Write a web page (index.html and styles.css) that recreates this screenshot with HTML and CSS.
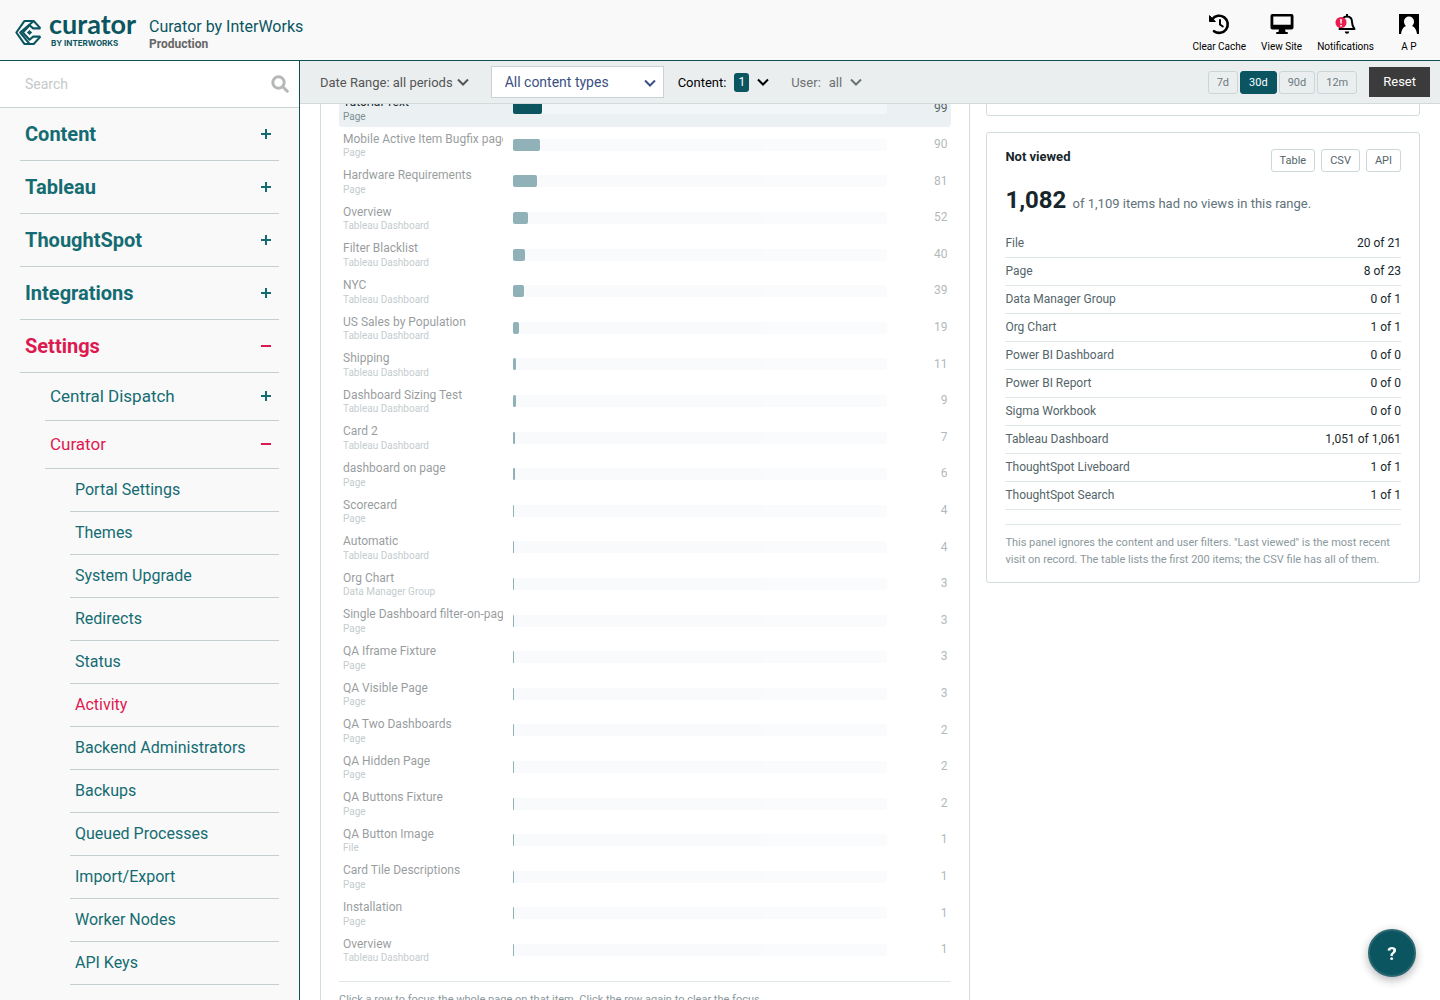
FILE: index.html
```html
<!DOCTYPE html>
<html lang="en">
<head>
  <meta charset="UTF-8" />
  <meta name="viewport" content="width=device-width, initial-scale=1.0"/>
  <title>Activity | Curator by InterWorks</title>
  <link rel="stylesheet" href="styles.css">
</head>
<body>

  <header class="top-bar">
    <a href="#" class="logo">
      <svg class="logo-mark" viewBox="0 0 26 26" fill="none" stroke="#0b5561" stroke-width="2" stroke-linejoin="round">
        <path d="M24.500 9 18 2H9L1.300 13 9 24h9l6.500-7"/>
        <path d="M18 2 5 13l9 11"/>
        <path d="M24.500 9h-7L14 6 7.500 13l6.500 7 3.500-3h7"/>
        <path d="M14 10.500 16.500 13 14 15.500 11.500 13z" fill="#0b5561" stroke="none"/>
      </svg>
      <span class="logo-text">
        <span class="logo-name">curator</span>
        <span class="logo-by">BY INTERWORKS</span>
      </span>
    </a>
    <div class="site">
      <a href="#" class="site-name">Curator by InterWorks</a>
      <div class="site-env">Production</div>
    </div>
    <nav class="tools">
      <a href="#">
        <svg width="22" height="22" viewBox="0 0 22 22" fill="none" stroke="#000" stroke-width="2.600" stroke-linecap="round">
          <path d="M4.200 6.200A8.600 8.600 0 1 1 6 18.200"/>
          <path d="M12 7v4.500l2.800 2" stroke-width="2"/>
          <path d="M1.500 3v5.500H7z" fill="#000" stroke-width="1" stroke-linejoin="round"/>
        </svg>
        Clear Cache
      </a>
      <a href="#">
        <svg width="24" height="22" viewBox="0 0 24 22">
          <path fill-rule="evenodd" d="M2.500 1h19A2 2 0 0 1 23.500 3v11.500a2 2 0 0 1-2 2H15l.6 2.500H17a1 1 0 0 1 0 2H7a1 1 0 0 1 0-2h1.400l.6-2.500H2.500a2 2 0 0 1-2-2V3a2 2 0 0 1 2-2zM3.300 3.600v8.200h17.400V3.600z"/>
        </svg>
        View Site
      </a>
      <a href="#">
        <svg width="24" height="22" viewBox="0 0 24 22">
          <path d="M13 3.500c-3.500 0-5 2.600-5 5.500 0 3.500-1 5-2.500 7h15c-1.500-2-2.500-3.500-2.500-7 0-2.900-1.500-5.500-5-5.500z" fill="none" stroke="#000" stroke-width="2" stroke-linejoin="round"/>
          <path d="M12 1h2v3h-2zM10.800 18.500h4.400a2.200 2.200 0 0 1-4.400 0z"/>
          <circle cx="7" cy="9.500" r="5.500" fill="#e91e4f"/>
          <path d="M7 6v4.500M7 12v1.500" stroke="#fff" stroke-width="1.500"/>
        </svg>
        Notifications
      </a>
      <a href="#" class="avatar">
        <svg width="20" height="22" viewBox="0 0 20 22">
          <path d="M0 1h20v20H0z"/>
          <path d="M10 3.500a5 5 0 0 1 5 5c0 2-1 3.500-2 4.500 3 1 4.500 4 5 8H2c.5-4 2-7 5-8-1-1-2-2.500-2-4.500a5 5 0 0 1 5-5z" fill="#fff"/>
        </svg>
        A P
      </a>
    </nav>
  </header>

  <div class="layout">
    <aside class="sidebar">
      <form class="search">
        <input type="search" placeholder="Search" aria-label="Search">
        <button type="button" aria-label="Search">
          <svg width="18" height="18" viewBox="0 0 18 18" fill="none" stroke="#b5b7b8" stroke-width="3" stroke-linecap="round">
            <circle cx="7.500" cy="7.500" r="5.700"/>
            <path d="m12 12 4.300 4.300"/>
          </svg>
        </button>
      </form>
      <ul class="menu">
        <li><a href="#">Content <i class="plus"></i></a></li>
        <li><a href="#">Tableau <i class="plus"></i></a></li>
        <li><a href="#">ThoughtSpot <i class="plus"></i></a></li>
        <li><a href="#">Integrations <i class="plus"></i></a></li>
        <li>
          <a href="#" class="active">Settings <i class="minus"></i></a>
          <ul class="submenu">
            <li><a href="#">Central Dispatch <i class="plus"></i></a></li>
            <li>
              <a href="#" class="active">Curator <i class="minus"></i></a>
              <ul class="pages">
                <li><a href="#">Portal Settings</a></li>
                <li><a href="#">Themes</a></li>
                <li><a href="#">System Upgrade</a></li>
                <li><a href="#">Redirects</a></li>
                <li><a href="#">Status</a></li>
                <li><a href="#" class="active">Activity</a></li>
                <li><a href="#">Backend Administrators</a></li>
                <li><a href="#">Backups</a></li>
                <li><a href="#">Queued Processes</a></li>
                <li><a href="#">Import/Export</a></li>
                <li><a href="#">Worker Nodes</a></li>
                <li><a href="#">API Keys</a></li>
              </ul>
            </li>
          </ul>
        </li>
      </ul>
    </aside>

    <main class="main">
      <div class="filters">
        <button type="button" class="filter">Date Range: all periods
          <svg class="chevron" viewBox="0 0 12 8"><path d="m1 1.500 5 5 5-5"/></svg>
        </button>
        <div class="type-select">
          <select aria-label="Content type">
            <option>All content types</option>
            <option>Page</option>
            <option>Tableau Dashboard</option>
          </select>
          <svg class="chevron" viewBox="0 0 12 8"><path d="m1 1.500 5 5 5-5"/></svg>
        </div>
        <button type="button" class="filter filter-on">Content: <span class="count">1</span>
          <svg class="chevron" viewBox="0 0 12 8"><path d="m1 1.500 5 5 5-5"/></svg>
        </button>
        <button type="button" class="filter filter-user">User: <span>all</span>
          <svg class="chevron" viewBox="0 0 12 8"><path d="m1 1.500 5 5 5-5"/></svg>
        </button>
        <div class="ranges">
          <button type="button">7d</button>
          <button type="button" class="on">30d</button>
          <button type="button">90d</button>
          <button type="button">12m</button>
        </div>
        <button type="button" class="reset">Reset</button>
      </div>

      <div class="content">
        <div class="panels">
          <section class="card top-content">
            <ul class="rows" id="rows"></ul>
            <p class="note">Click a row to focus the whole page on that item. Click the row again to clear the focus.</p>
          </section>

          <div class="side">
            <section class="card card-end"></section>
            <section class="card not-viewed">
              <div class="card-head">
                <h2>Not viewed</h2>
                <div class="exports">
                  <button type="button">Table</button>
                  <button type="button">CSV</button>
                  <button type="button">API</button>
                </div>
              </div>
              <p class="total"><strong>1,082</strong> of 1,109 items had no views in this range.</p>
              <table>
                <tr><th scope="row">File</th><td>20 of 21</td></tr>
                <tr><th scope="row">Page</th><td>8 of 23</td></tr>
                <tr><th scope="row">Data Manager Group</th><td>0 of 1</td></tr>
                <tr><th scope="row">Org Chart</th><td>1 of 1</td></tr>
                <tr><th scope="row">Power BI Dashboard</th><td>0 of 0</td></tr>
                <tr><th scope="row">Power BI Report</th><td>0 of 0</td></tr>
                <tr><th scope="row">Sigma Workbook</th><td>0 of 0</td></tr>
                <tr><th scope="row">Tableau Dashboard</th><td>1,051 of 1,061</td></tr>
                <tr><th scope="row">ThoughtSpot Liveboard</th><td>1 of 1</td></tr>
                <tr><th scope="row">ThoughtSpot Search</th><td>1 of 1</td></tr>
              </table>
              <p class="note">This panel ignores the content and user filters. "Last viewed" is the most recent visit on record. The table lists the first 200 items; the CSV file has all of them.</p>
            </section>
          </div>
        </div>
      </div>
    </main>
  </div>

  <button type="button" class="help" aria-label="Help">?</button>

  <script src="script.js"></script>
</body>
</html>
```
FILE: styles.css
```css
* {
  box-sizing: border-box;
}

body {
  margin: 0;
  height: 100vh;
  display: flex;
  flex-direction: column;
  overflow: hidden;
  font-family: Roboto, "Liberation Sans", sans-serif;
  font-size: 13px;
  color: #16262b;
  background: #fff;
}

a {
  text-decoration: none;
}

ul {
  list-style: none;
  margin: 0;
  padding: 0;
}

button, input, select {
  font-family: inherit;
}

button {
  cursor: pointer;
}

/* header */
.top-bar {
  display: flex;
  align-items: center;
  flex: none;
  height: 61px;
  padding: 0 21px 0 15px;
  background: #f9f9f9;
  border-bottom: 1px solid #0b5156;
}

.logo {
  display: flex;
  align-items: center;
  gap: 7px;
  width: 119px;
  color: #0b5561;
}

.logo-mark {
  flex: none;
  width: 27px;
  height: 27px;
  margin-top: 5px;
}

.logo-text {
  display: flex;
  flex-direction: column;
  padding-bottom: 2px;
}

.logo-name {
  font-family: Lato, sans-serif;
  font-size: 27px;
  font-weight: bold;
  line-height: 28px;
}

.logo-by {
  padding-left: 2px;
  font-family: Inter, sans-serif;
  font-size: 8px;
  font-weight: bold;
  line-height: 10px;
  white-space: nowrap;
}

.site {
  margin-left: 15px;
  padding-top: 9px;
}

.site-name {
  font-size: 16px;
  line-height: 18px;
  color: #0b5561;
}

.site-env {
  font-size: 12px;
  font-weight: bold;
  line-height: 16px;
  color: #666;
}

.tools {
  display: flex;
  gap: 15px;
  margin-left: auto;
  padding-top: 7px;
}

.tools a {
  display: flex;
  flex-direction: column;
  align-items: center;
  gap: 5px;
  font-size: 10px;
  line-height: 14px;
  color: #000;
}

.tools .avatar {
  margin-left: 10px;
}

/* sidebar */
.layout {
  display: flex;
  flex: 1;
  min-height: 0;
}

.sidebar {
  flex: none;
  width: 300px;
  overflow: hidden;
  background: #f9f9f9;
  border-right: 1px solid #0b5156;
}

.search {
  display: flex;
  align-items: center;
  height: 47px;
  padding: 0 10px 0 25px;
  background: #fff;
  border-bottom: 1px solid #c8d2d4;
}

.search input {
  flex: 1;
  min-width: 0;
  padding: 0;
  border: 0;
  outline: 0;
  font-size: 14px;
  background: none;
}

.search input::placeholder {
  color: #c6c8c9;
}

.search button {
  display: flex;
  padding: 0;
  border: 0;
  background: none;
}

.menu {
  padding: 0 20px;
}

.menu a {
  display: flex;
  align-items: center;
  justify-content: space-between;
  height: 53px;
  padding: 0 8px 1px 5px;
  border-bottom: 1px solid #c3cfd1;
  font-size: 20px;
  font-weight: bold;
  color: #146c72;
}

.submenu {
  padding-left: 25px;
}

.submenu a {
  height: 48px;
  font-size: 17px;
  font-weight: normal;
}

.pages {
  padding-left: 25px;
}

.pages a {
  height: 43px;
  font-size: 16px;
}

.menu a.active {
  color: #dd1a50;
}

.plus, .minus {
  width: 10px;
  height: 10px;
  background: linear-gradient(currentColor, currentColor) center / 10px 2px no-repeat;
}

.plus {
  background:
    linear-gradient(currentColor, currentColor) center / 10px 2px no-repeat,
    linear-gradient(currentColor, currentColor) center / 2px 10px no-repeat;
}

/* filter bar */
.main {
  flex: 1;
  min-width: 0;
  display: flex;
  flex-direction: column;
}

.filters {
  display: flex;
  align-items: center;
  flex: none;
  height: 43px;
  padding: 0 10px 0 20px;
  background: #ebeeef;
  border-bottom: 1px solid #d3dadc;
}

.filter {
  display: flex;
  align-items: center;
  gap: 4px;
  padding: 0;
  border: 0;
  background: none;
  font-size: 13px;
  color: #555;
  white-space: nowrap;
}

.filter-on {
  gap: 8px;
  margin-left: 14px;
  color: #000;
}

.filter-user {
  gap: 8px;
  margin-left: 22px;
  color: #6c7172;
}

.chevron {
  width: 12px;
  height: 8px;
  fill: none;
  stroke: currentColor;
  stroke-width: 2;
}

.type-select {
  position: relative;
  margin-left: 22px;
  color: #3a5082;
}

.type-select select {
  width: 173px;
  height: 32px;
  padding: 0 30px 0 13px;
  appearance: none;
  border: 1px solid #c9d2d6;
  border-radius: 0;
  background: #fff;
  font-size: 14px;
  color: inherit;
}

.type-select .chevron {
  position: absolute;
  right: 8px;
  top: 13px;
  pointer-events: none;
}

.count {
  padding: 0 4px;
  border-radius: 3px;
  background: #0b5561;
  color: #fff;
  font-size: 12px;
  line-height: 19px;
}

.ranges {
  display: flex;
  gap: 2px;
  margin-left: auto;
}

.ranges button {
  height: 23px;
  padding: 0 8px;
  border: 1px solid #cbd5d7;
  border-radius: 3px;
  background: transparent;
  font-size: 11px;
  color: #6b7a7e;
}

.ranges .on {
  border-color: #0b5561;
  background: #0b5561;
  color: #fff;
}

.reset {
  height: 30px;
  margin-left: 12px;
  padding: 0 14px 2px;
  border: 0;
  background: #3b3b3b;
  font-size: 13px;
  color: #fff;
}

/* panels */
.content {
  flex: 1;
  min-height: 0;
  overflow: hidden;
}

.panels {
  display: grid;
  grid-template-columns: 3fr 2fr;
  gap: 16px;
  align-items: start;
  margin-top: -15px;
  padding: 0 20px 20px;
}

.card {
  padding: 16px 18px;
  border: 1px solid #d0dcde;
  border-radius: 3px;
  background: #fff;
}

.top-content {
  padding-top: 0;
}

.row {
  display: grid;
  grid-template-columns: 160px 1fr 50px;
  gap: 10px;
  align-items: center;
  padding: 5px 4px;
  border-radius: 3px;
  line-height: 1.3;
  cursor: pointer;
}

.row > * {
  opacity: 0.45;
}

.row.focused {
  background: #ebf0f2;
}

.row.focused > * {
  opacity: 1;
}

.row-name {
  overflow: hidden;
  font-size: 12px;
  white-space: nowrap;
}

.row-kind {
  font-size: 10px;
  line-height: 1.1;
  color: #7b8e93;
}

.track {
  height: 12px;
  border-radius: 2px;
  background: #f3f6f9;
}

.bar {
  height: 12px;
  min-width: 1px;
  border-radius: 2px;
  background: #0b5561;
}

.row-count {
  font-size: 12px;
  text-align: right;
  color: #54656a;
}

.note {
  margin: 13px 0 0;
  padding-top: 9px;
  border-top: 1px solid #dfe6e7;
  font-size: 11px;
  line-height: 17px;
  color: #8b999d;
}

.side {
  display: flex;
  flex-direction: column;
  gap: 16px;
}

.card-end {
  height: 27px;
  padding: 0;
}

.not-viewed {
  padding-bottom: 14px;
}

.card-head {
  display: flex;
  justify-content: space-between;
}

.card-head h2 {
  margin: 0;
  font-size: 13px;
  line-height: 16px;
}

.exports {
  display: flex;
  gap: 6px;
}

.exports button {
  height: 23px;
  padding: 0 8px;
  border: 1px solid #ccd7d9;
  border-radius: 3px;
  background: #fff;
  font-size: 11px;
  color: #54656a;
}

.total {
  margin: 12px 0 10px;
  line-height: 33px;
  color: #61727a;
}

.total strong {
  margin-right: 3px;
  font-size: 24px;
  color: #16262b;
}

table {
  width: 100%;
  border-collapse: collapse;
  font-size: 12px;
  line-height: 17px;
}

th, td {
  padding: 5px 0;
  border-bottom: 1px solid #dfe6e7;
}

th {
  text-align: left;
  font-weight: normal;
  color: #54656a;
}

td {
  text-align: right;
}

.not-viewed .note {
  margin-top: 14px;
}

.help {
  position: fixed;
  right: 24px;
  bottom: 23px;
  width: 48px;
  height: 48px;
  padding: 0;
  border: 2px solid #2a6771;
  border-radius: 50%;
  background: #0b5561;
  box-shadow: 0 3px 10px rgba(0, 0, 0, 0.3);
  font-size: 19px;
  font-weight: bold;
  color: #fff;
}
```
FILE: script.js
```js
const items = [
  ["Tutorial Text", "Page", 99],
  ["Mobile Active Item Bugfix page", "Page", 90],
  ["Hardware Requirements", "Page", 81],
  ["Overview", "Tableau Dashboard", 52],
  ["Filter Blacklist", "Tableau Dashboard", 40],
  ["NYC", "Tableau Dashboard", 39],
  ["US Sales by Population", "Tableau Dashboard", 19],
  ["Shipping", "Tableau Dashboard", 11],
  ["Dashboard Sizing Test", "Tableau Dashboard", 9],
  ["Card 2", "Tableau Dashboard", 7],
  ["dashboard on page", "Page", 6],
  ["Scorecard", "Page", 4],
  ["Automatic", "Tableau Dashboard", 4],
  ["Org Chart", "Data Manager Group", 3],
  ["Single Dashboard filter-on-page", "Page", 3],
  ["QA Iframe Fixture", "Page", 3],
  ["QA Visible Page", "Page", 3],
  ["QA Two Dashboards", "Page", 2],
  ["QA Hidden Page", "Page", 2],
  ["QA Buttons Fixture", "Page", 2],
  ["QA Button Image", "File", 1],
  ["Card Tile Descriptions", "Page", 1],
  ["Installation", "Page", 1],
  ["Overview", "Tableau Dashboard", 1]
];
const maxViews = 1270;

document.getElementById("rows").innerHTML = items.map(([name, kind, views], i) => `
  <li class="row${i === 0 ? " focused" : ""}">
    <div class="row-name">${name}<div class="row-kind">${kind}</div></div>
    <div class="track"><div class="bar" style="width: ${views / maxViews * 100}%"></div></div>
    <div class="row-count">${views}</div>
  </li>`).join("");
```
